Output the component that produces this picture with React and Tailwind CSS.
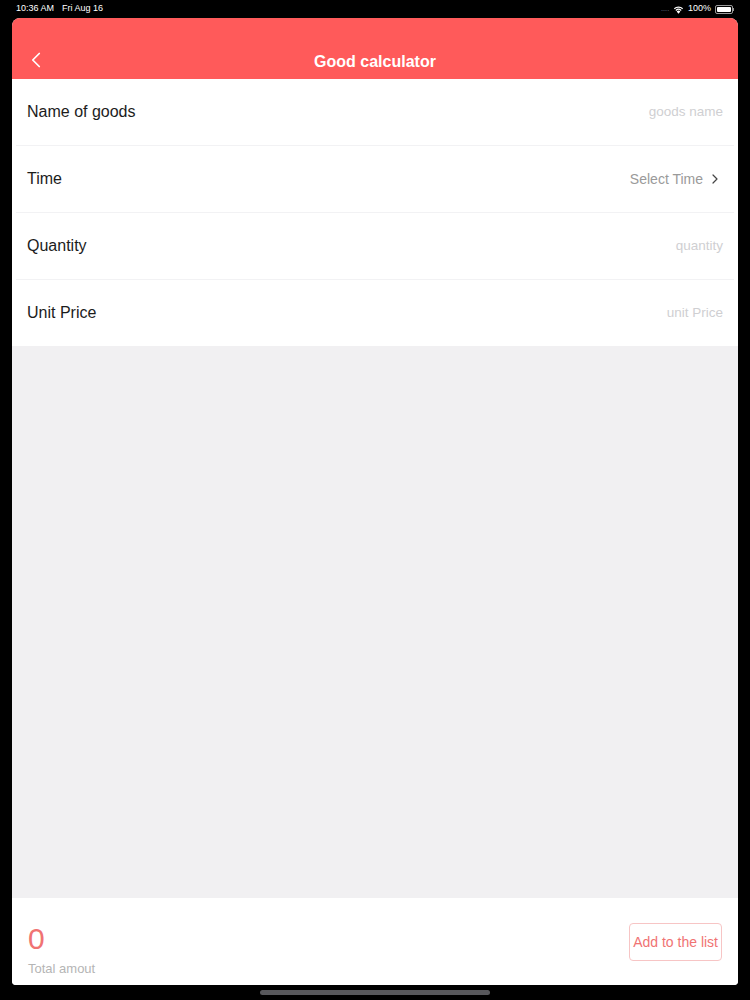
import { ChevronLeft, ChevronRight } from 'lucide-react'

const rows = [
  { label: 'Name of goods', hint: 'goods name' },
  { label: 'Time', hint: 'Select Time', arrow: true },
  { label: 'Quantity', hint: 'quantity' },
  { label: 'Unit Price', hint: 'unit Price' },
]

function StatusBar() {
  return (
    <div className="h-[18px] flex items-center justify-between px-4 text-[9px] text-white">
      <div className="flex gap-2">
        <span>10:36 AM</span>
        <span>Fri Aug 16</span>
      </div>
      <div className="flex items-center gap-1">
        <span className="text-gray-600 tracking-tighter">....</span>
        <svg width="11" height="9" viewBox="0 0 12 9" fill="white">
          <path d="M6 9 L4 6.6 A3 3 0 0 1 8 6.6 Z" />
          <path d="M2.6 5 A5 5 0 0 1 9.4 5 L8.5 6 A3.7 3.7 0 0 0 3.5 6 Z" />
          <path d="M1 3.2 A7.4 7.4 0 0 1 11 3.2 L10.1 4.2 A6 6 0 0 0 1.9 4.2 Z" />
        </svg>
        <span>100%</span>
        <div className="flex items-center">
          <div className="w-[18px] h-[9px] rounded-[2px] border border-white/60 p-[1px]">
            <div className="w-full h-full bg-white rounded-[1px]" />
          </div>
          <div className="w-[1px] h-[3px] bg-white/60" />
        </div>
      </div>
    </div>
  )
}

export default function App() {
  return (
    <div
      className="w-[750px] h-[1000px] bg-black flex flex-col"
      style={{ fontFamily: '"Liberation Sans", Arial, sans-serif' }}
    >
      <StatusBar />
      <div className="mx-3 h-[967px] rounded-t-lg rounded-b-[4px] overflow-hidden flex flex-col bg-[#f1f0f2]">
        <header className="h-[61px] bg-[#ff5a5a] flex items-end pb-[7px] relative">
          <ChevronLeft className="absolute left-[11px] bottom-[6px] text-white" size={26} strokeWidth={1.6} />
          <h1 className="flex-1 text-center text-white text-[16px] font-semibold leading-[20px]">Good calculator</h1>
        </header>
        <div className="bg-white">
          {rows.map((r, i) => (
            <div key={r.label}>
              {i > 0 && <div className="mx-1 h-px bg-[#f2f2f4]" />}
              <div className="h-[66px] flex items-center justify-between pl-[15px] pr-[15px]">
                <span className="text-[16px] text-[#1c1c1c]">{r.label}</span>
                {r.arrow ? (
                  <span className="flex items-center gap-1 text-[14px] text-[#9a9a9a]">
                    {r.hint}
                    <ChevronRight size={16} strokeWidth={1.8} className="text-[#444]" />
                  </span>
                ) : (
                  <span className="text-[13.5px] text-[#cfcfd2]">{r.hint}</span>
                )}
              </div>
            </div>
          ))}
        </div>
        <div className="flex-1" />
        <footer className="h-[87px] bg-white flex items-center justify-between pl-4 pr-4">
          <div className="flex flex-col pt-[18px]">
            <span className="text-[30px] leading-[32px] text-[#f07373] font-light">0</span>
            <span className="text-[13px] text-[#b5b5b5] mt-[4px]">Total amout</span>
          </div>
          <button className="h-[38px] px-[3px] border border-[#f7c5c5] rounded-[4px] text-[14px] text-[#f07373] mt-[1px]">
            Add to the list
          </button>
        </footer>
      </div>
      <div className="flex-1 flex items-center justify-center">
        <div className="w-[230px] h-[5px] rounded-full bg-[#58585c]" />
      </div>
    </div>
  )
}
